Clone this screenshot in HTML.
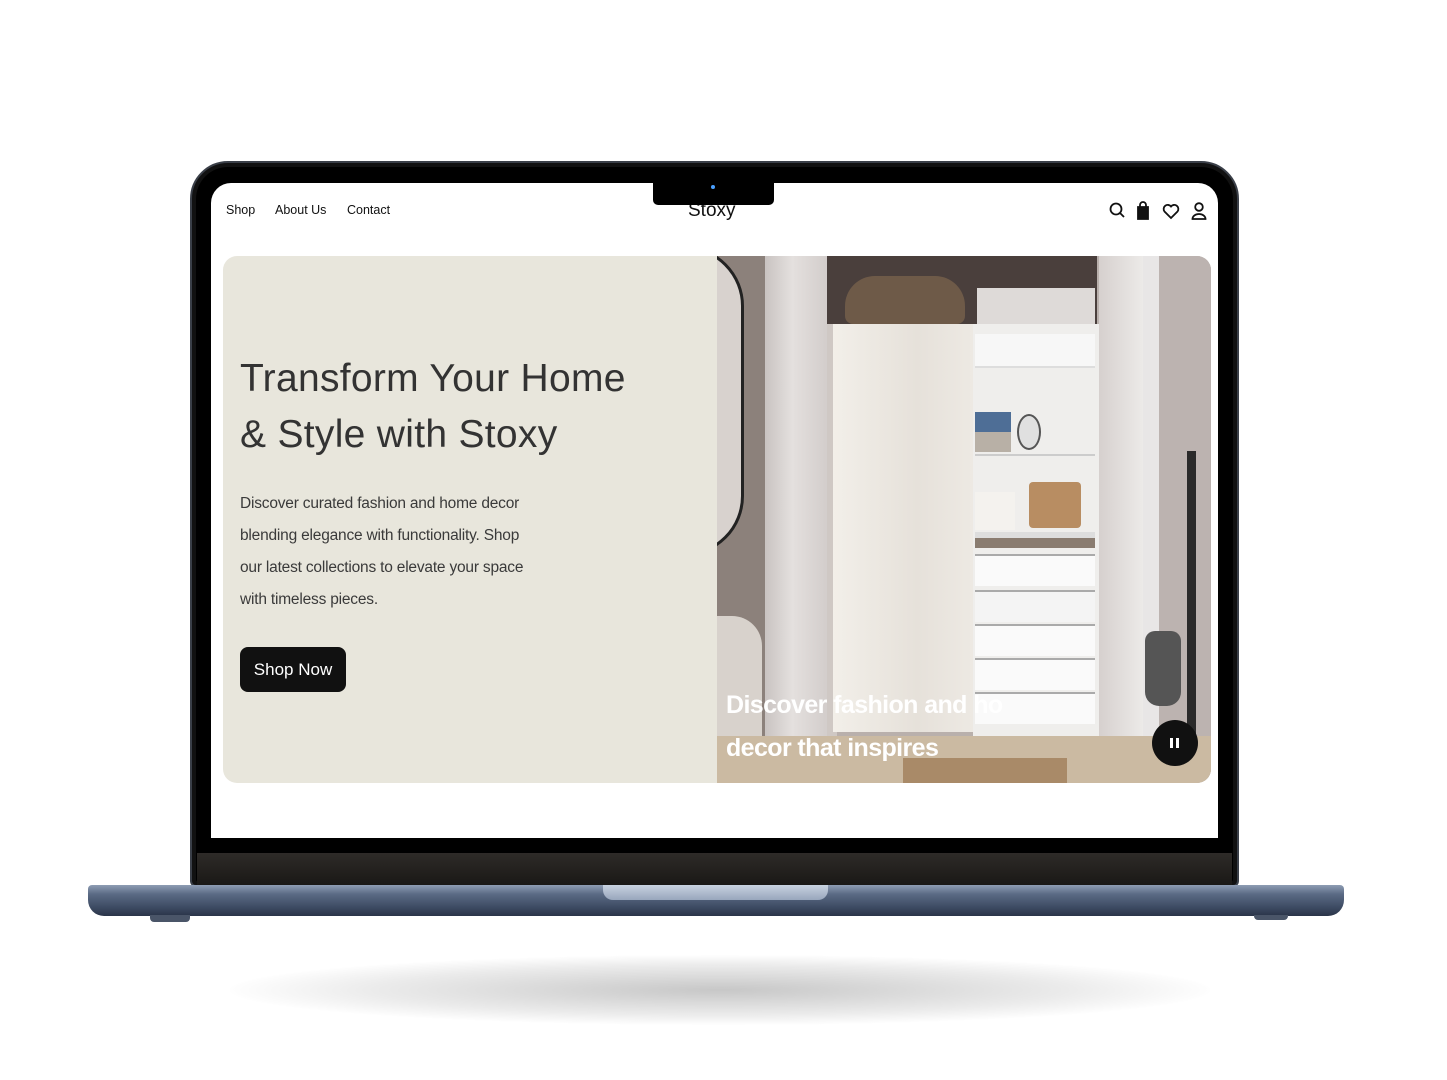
<!DOCTYPE html>
<html><head><meta charset="utf-8"><style>
*{margin:0;padding:0;box-sizing:border-box}
body{width:1447px;height:1080px;background:#fff;position:relative;overflow:hidden;font-family:"Liberation Sans",sans-serif}
.a{position:absolute}
</style></head><body>
<div class="a" style="left:230px;top:955px;width:980px;height:70px;border-radius:50%;background:radial-gradient(ellipse at center,rgba(0,0,0,0.22) 0%,rgba(0,0,0,0.08) 50%,rgba(0,0,0,0) 72%)"></div>
<div class="a" style="left:190px;top:161px;width:1049px;height:726px;background:#111;border-radius:38px 38px 6px 6px;border:2px solid #3a3f48"></div>
<div class="a" style="left:196px;top:167px;width:1037px;height:716px;background:#000;border-radius:32px 32px 4px 4px"></div>
<div class="a" style="left:197px;top:853px;width:1035px;height:32px;background:linear-gradient(#2e2b28,#1a1816)"></div>
<div class="a" style="left:211px;top:183px;width:1007px;height:655px;background:#fff;border-radius:20px 20px 0 0;overflow:hidden">
  <div class="a" style="left:15px;top:20px;font-size:12.5px;color:#111">Shop</div>
  <div class="a" style="left:64px;top:20px;font-size:12.5px;color:#111">About Us</div>
  <div class="a" style="left:136px;top:20px;font-size:12.5px;color:#111">Contact</div>
  <div class="a" style="left:477px;top:17px;font-size:19px;color:#111">Stoxy</div>
  <svg class="a" style="left:897px;top:18px" width="100" height="20" viewBox="0 0 100 20" fill="none" stroke="#111" stroke-width="1.8">
    <circle cx="8" cy="8" r="5.5"/><path d="M12 12l4 4"/>
    <path d="M30 6h10v12H30z" fill="#111"/><path d="M32 6V4a3 3 0 0 1 6 0v2"/>
    <path d="M63 17l-6.5-6.5a4 4 0 0 1 6.5-5 4 4 0 0 1 6.5 5z"/>
    <circle cx="91" cy="6" r="3.8"/><path d="M84.5 18a6.5 5 0 0 1 13 0z"/>
  </svg>
  <div class="a" style="left:12px;top:73px;width:988px;height:527px;border-radius:14px;overflow:hidden;background:#e8e6dc">
    <div class="a" style="left:17px;top:95px;font-size:39px;line-height:56px;color:#333;letter-spacing:0.3px">Transform Your Home<br>&amp; Style with Stoxy</div>
    <div class="a" style="left:17px;top:232px;font-size:15.5px;line-height:32px;color:#3a3a3a;width:300px;letter-spacing:-0.2px">Discover curated fashion and home decor blending elegance with functionality. Shop our latest collections to elevate your space with timeless pieces.</div>
    <div class="a" style="left:17px;top:391px;width:106px;height:45px;background:#111;border-radius:8px;color:#fff;font-size:17px;line-height:45px;text-align:center">Shop Now</div>
    <div class="a" style="left:494px;top:0;width:494px;height:527px;background:#b9b0ac;overflow:hidden">
      <div class="a" style="left:0;top:0;width:50px;height:527px;background:#8c817b"></div>
      <div class="a" style="left:-75px;top:-10px;width:102px;height:310px;border:3px solid #222;border-radius:0 60px 60px 0;background:#d8d2ce"></div>
      <div class="a" style="left:48px;top:0;width:68px;height:527px;background:linear-gradient(90deg,#c9c3c1,#e4e0de 40%,#d0cac8)"></div>
      <div class="a" style="left:110px;top:0;width:270px;height:70px;background:#4a3f3c"></div>
      <div class="a" style="left:128px;top:20px;width:120px;height:48px;background:#6e5a48;border-radius:30px 30px 8px 8px"></div>
      <div class="a" style="left:260px;top:32px;width:118px;height:38px;background:#dedad8"></div>
      <div class="a" style="left:110px;top:68px;width:10px;height:412px;background:#cfc8c4"></div>
      <div class="a" style="left:116px;top:68px;width:140px;height:408px;background:linear-gradient(90deg,#f2efe9,#e6e1da 60%,#ede9e3)"></div>
      <div class="a" style="left:256px;top:68px;width:126px;height:412px;background:#efeeec"></div>
      <div class="a" style="left:258px;top:78px;width:120px;height:34px;background:#f7f7f7;border-bottom:2px solid #ddd"></div>
      <div class="a" style="left:258px;top:156px;width:36px;height:40px;background:linear-gradient(#4e6e96 50%,#b8b0a6 50%)"></div>
      <div class="a" style="left:300px;top:158px;width:24px;height:36px;border-radius:50%;background:#e0e0e0;border:2px solid #555"></div>
      <div class="a" style="left:258px;top:198px;width:120px;height:2px;background:#ccc"></div>
      <div class="a" style="left:258px;top:236px;width:40px;height:38px;background:#f4f2ee"></div>
      <div class="a" style="left:312px;top:226px;width:52px;height:46px;background:#b88d62;border-radius:4px"></div>
      <div class="a" style="left:258px;top:276px;width:120px;height:6px;background:#ddd"></div>
      <div class="a" style="left:258px;top:282px;width:120px;height:10px;background:#8a7c70"></div>
      <div class="a" style="left:258px;top:298px;width:120px;height:32px;background:#fafafa;border-top:2px solid #aaa"></div>
      <div class="a" style="left:258px;top:334px;width:120px;height:32px;background:#f4f4f4;border-top:2px solid #aaa"></div>
      <div class="a" style="left:258px;top:368px;width:120px;height:32px;background:#fafafa;border-top:2px solid #aaa"></div>
      <div class="a" style="left:258px;top:402px;width:120px;height:32px;background:#fafafa;border-top:2px solid #aaa"></div>
      <div class="a" style="left:258px;top:436px;width:120px;height:32px;background:#fafafa;border-top:2px solid #aaa"></div>
      <div class="a" style="left:382px;top:0;width:44px;height:527px;background:linear-gradient(90deg,#d6d0ce,#eceae8)"></div>
      <div class="a" style="left:426px;top:0;width:68px;height:527px;background:#bcb3b0"></div>
      <div class="a" style="left:426px;top:0;width:16px;height:527px;background:#e8e6e6"></div>
      <div class="a" style="left:428px;top:375px;width:36px;height:75px;background:#555;border-radius:10px 10px 14px 14px"></div>
      <div class="a" style="left:470px;top:195px;width:9px;height:300px;background:#2a2a2a"></div>
      <div class="a" style="left:0;top:480px;width:494px;height:47px;background:#cbbaa2"></div>
      <div class="a" style="left:186px;top:502px;width:164px;height:25px;background:#a98a68"></div>
      <div class="a" style="left:0;top:360px;width:45px;height:120px;background:#d8d2cc;border-radius:0 30px 0 0"></div>
      <div class="a" style="left:9px;top:428px;font-size:25px;line-height:43px;color:#fff;font-weight:bold;white-space:nowrap;letter-spacing:-0.6px">Discover fashion and ho<br>decor that inspires</div>
      <div class="a" style="left:435px;top:464px;width:46px;height:46px;border-radius:50%;background:#111"></div>
      <div class="a" style="left:453px;top:482px;width:3px;height:10px;background:#fff"></div>
      <div class="a" style="left:459px;top:482px;width:3px;height:10px;background:#fff"></div>
    </div>
  </div>
</div>
<div class="a" style="left:653px;top:180px;width:121px;height:25px;background:#000;border-radius:0 0 5px 5px"></div>
<div class="a" style="left:711px;top:185px;width:4px;height:4px;border-radius:50%;background:#4aa0ff"></div>
<div class="a" style="left:88px;top:885px;width:1256px;height:31px;background:linear-gradient(#8e9db4,#5a6a84 30%,#3e4c64 70%,#2a3448);border-radius:4px 4px 16px 16px"></div>
<div class="a" style="left:603px;top:885px;width:225px;height:15px;background:linear-gradient(#c8d2e0,#98a6bc);border-radius:0 0 10px 10px"></div>
<div class="a" style="left:150px;top:915px;width:40px;height:7px;background:#4a5568;border-radius:0 0 4px 4px"></div>
<div class="a" style="left:1254px;top:915px;width:34px;height:5px;background:#4a5568;border-radius:0 0 4px 4px"></div>
</body></html>
